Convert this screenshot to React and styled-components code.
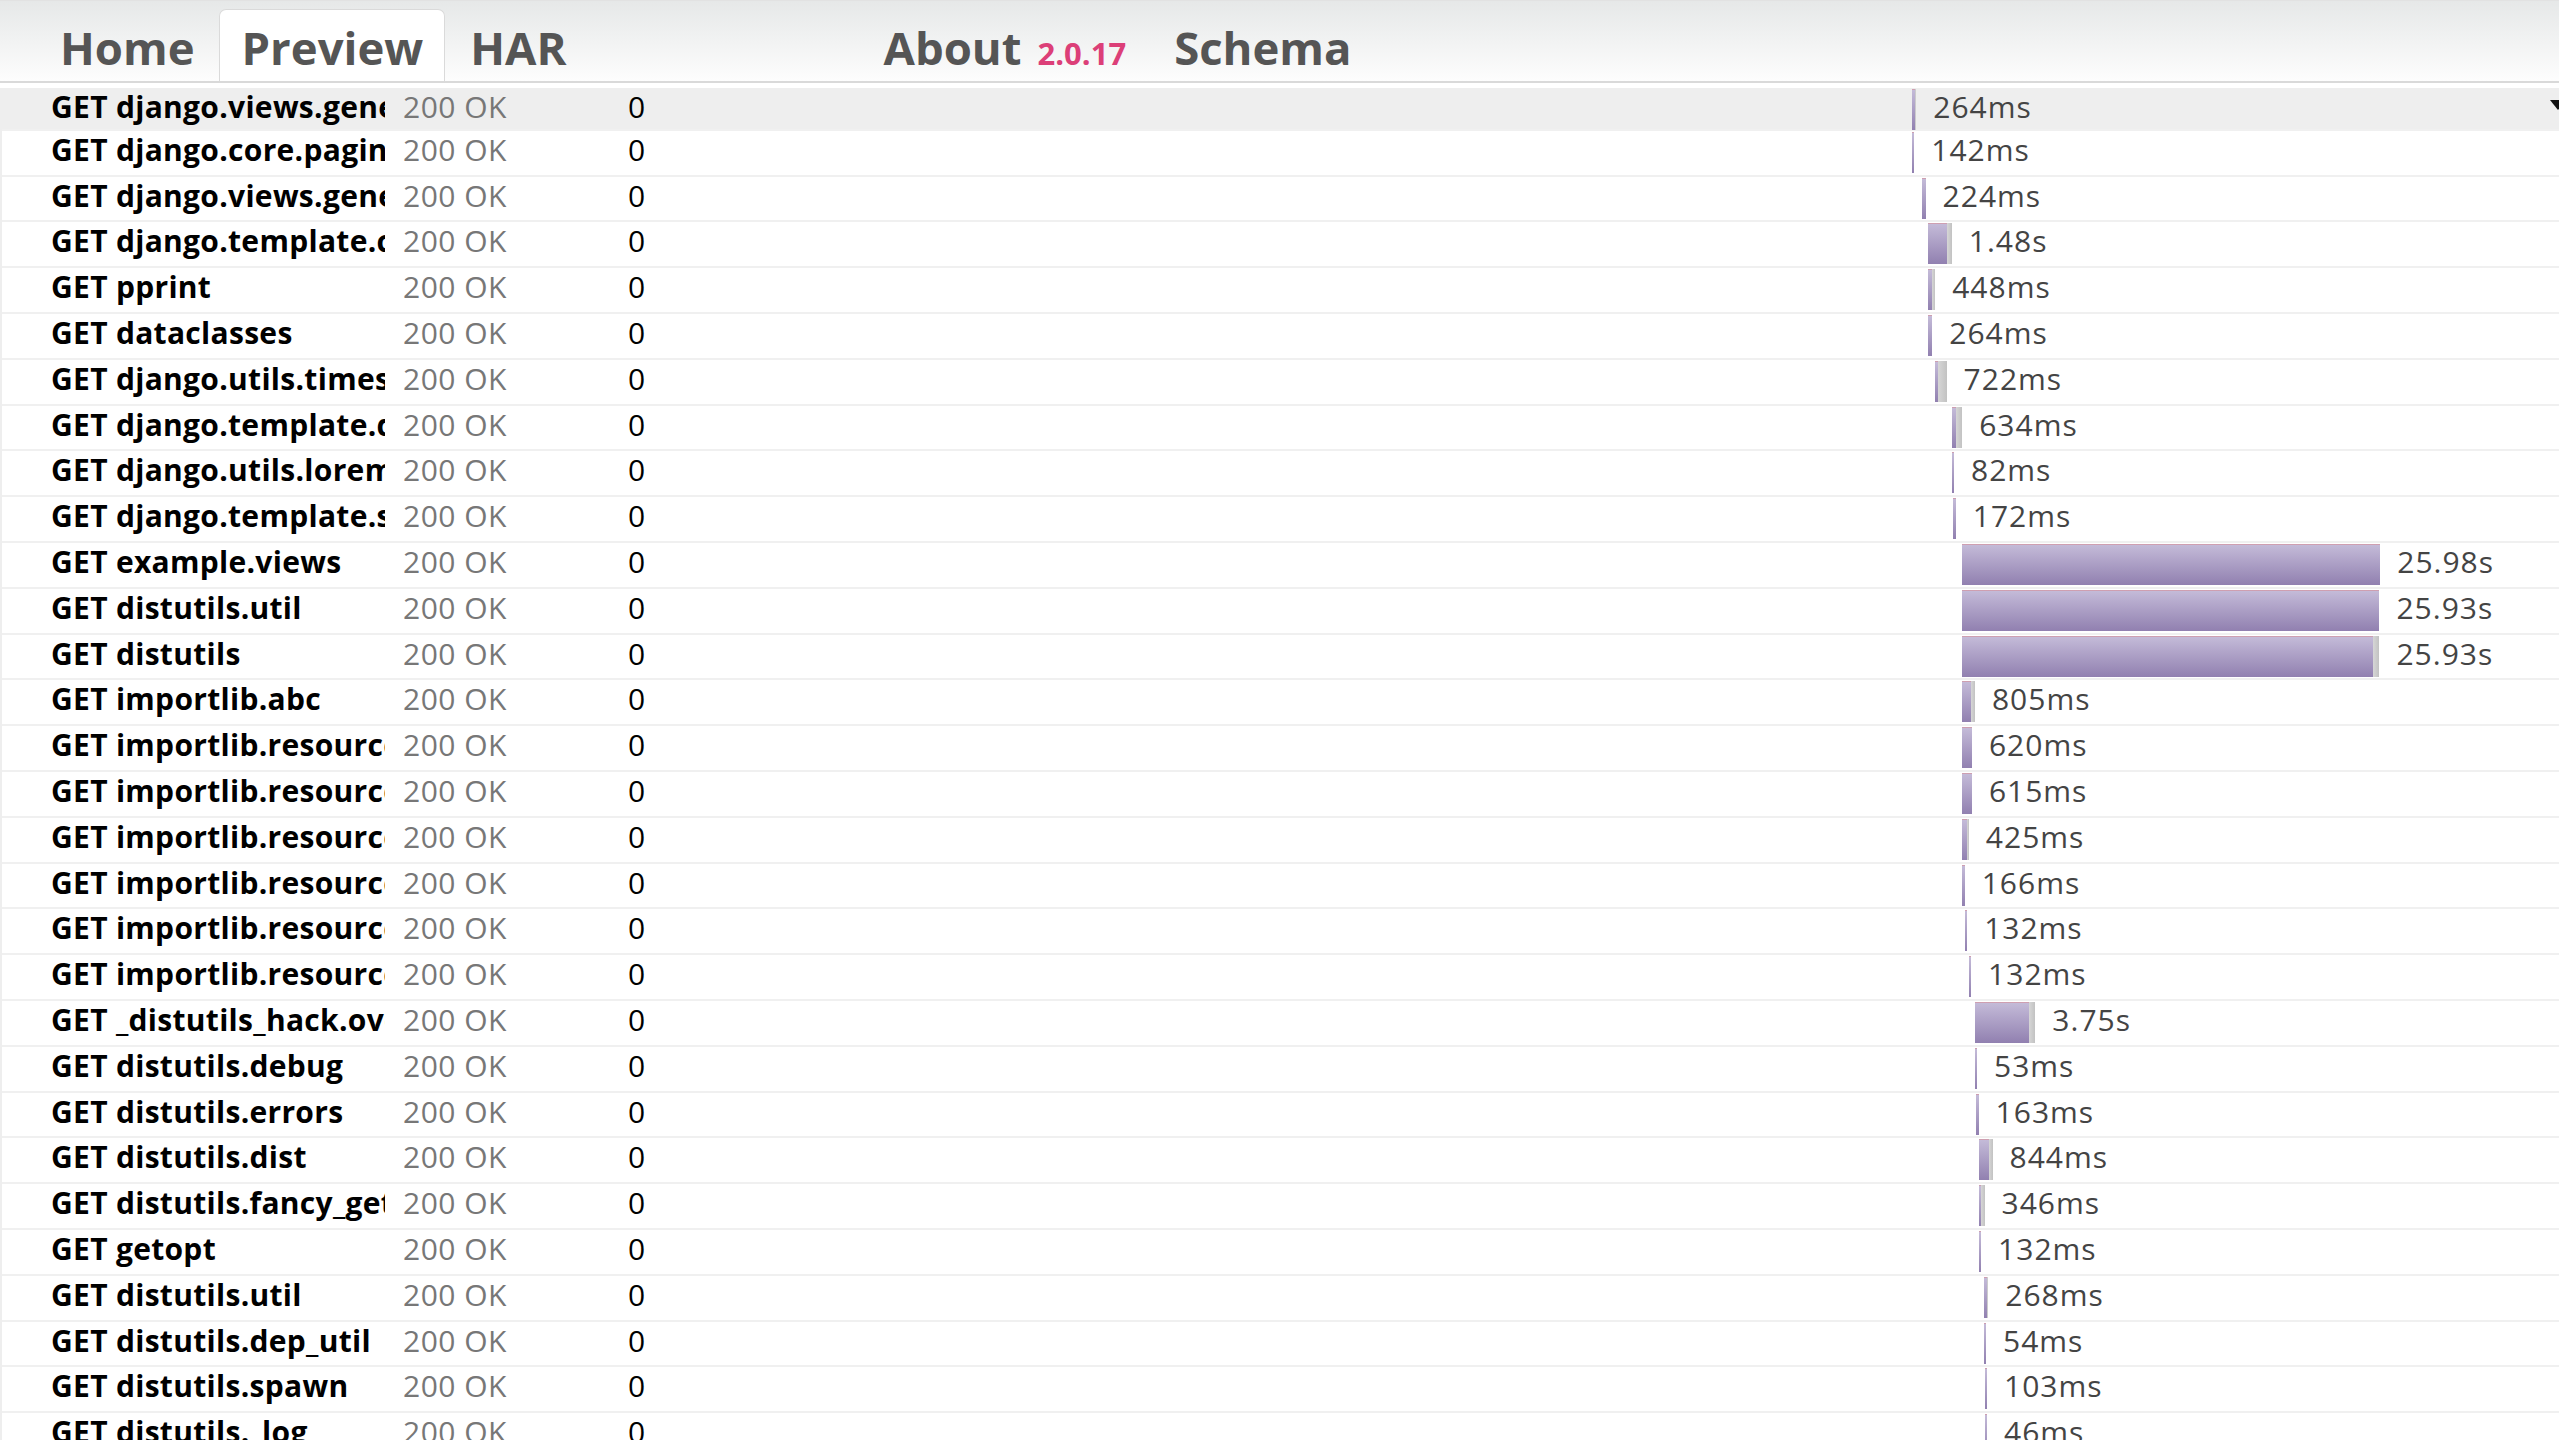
import React from 'react';
import styled, { createGlobalStyle } from 'styled-components';

const PX_PER_MS = 0.0161;
const TIMELINE_ORIGIN = 1152;

const requests = [
  { name: 'GET django.views.generic', start: 0, dur: 264, recv: 60, label: '264ms' },
  { name: 'GET django.core.paginator', start: 0, dur: 142, recv: 0, label: '142ms' },
  { name: 'GET django.views.generic.base', start: 621, dur: 224, recv: 0, label: '224ms' },
  { name: 'GET django.template.context', start: 994, dur: 1480, recv: 310, label: '1.48s' },
  { name: 'GET pprint', start: 994, dur: 448, recv: 170, label: '448ms' },
  { name: 'GET dataclasses', start: 994, dur: 264, recv: 0, label: '264ms' },
  { name: 'GET django.utils.timesince', start: 1429, dur: 722, recv: 530, label: '722ms' },
  { name: 'GET django.template.defaultfilters', start: 2484, dur: 634, recv: 370, label: '634ms' },
  { name: 'GET django.utils.lorem_ipsum', start: 2484, dur: 82, recv: 0, label: '82ms' },
  { name: 'GET django.template.smartif', start: 2547, dur: 172, recv: 0, label: '172ms' },
  { name: 'GET example.views', start: 3106, dur: 25980, recv: 0, label: '25.98s' },
  { name: 'GET distutils.util', start: 3106, dur: 25930, recv: 0, label: '25.93s' },
  { name: 'GET distutils', start: 3106, dur: 25930, recv: 430, label: '25.93s' },
  { name: 'GET importlib.abc', start: 3106, dur: 805, recv: 230, label: '805ms' },
  { name: 'GET importlib.resources.abc', start: 3106, dur: 620, recv: 0, label: '620ms' },
  { name: 'GET importlib.resources', start: 3106, dur: 615, recv: 0, label: '615ms' },
  { name: 'GET importlib.resources._common', start: 3106, dur: 425, recv: 120, label: '425ms' },
  { name: 'GET importlib.resources._adapters', start: 3106, dur: 166, recv: 0, label: '166ms' },
  { name: 'GET importlib.resources._legacy', start: 3292, dur: 132, recv: 0, label: '132ms' },
  { name: 'GET importlib.resources.readers', start: 3540, dur: 132, recv: 0, label: '132ms' },
  { name: 'GET _distutils_hack.override', start: 3913, dur: 3750, recv: 370, label: '3.75s' },
  { name: 'GET distutils.debug', start: 3913, dur: 53, recv: 0, label: '53ms' },
  { name: 'GET distutils.errors', start: 3975, dur: 163, recv: 0, label: '163ms' },
  { name: 'GET distutils.dist', start: 4161, dur: 844, recv: 220, label: '844ms' },
  { name: 'GET distutils.fancy_getopt', start: 4161, dur: 346, recv: 220, label: '346ms' },
  { name: 'GET getopt', start: 4161, dur: 132, recv: 0, label: '132ms' },
  { name: 'GET distutils.util', start: 4472, dur: 268, recv: 80, label: '268ms' },
  { name: 'GET distutils.dep_util', start: 4472, dur: 54, recv: 0, label: '54ms' },
  { name: 'GET distutils.spawn', start: 4534, dur: 103, recv: 0, label: '103ms' },
  { name: 'GET distutils._log', start: 4534, dur: 46, recv: 0, label: '46ms' },
];

const GlobalStyle = createGlobalStyle`
  html, body {
    margin: 0;
    padding: 0;
    overflow: hidden;
    background: #fff;
    font-family: "Open Sans", "DejaVu Sans", sans-serif;
  }
  * {
    box-sizing: border-box;
  }
`;

const Header = styled.nav`
  height: 83px;
  display: flex;
  align-items: flex-end;
  gap: 2px;
  padding-left: 37px;
  border-top: 1px solid #e2e2e2;
  border-bottom: 2px solid #d9d9d9;
  background: linear-gradient(#e6e8e8, #fdfdfd);
`;

const Tab = styled.div`
  height: 72px;
  display: flex;
  align-items: baseline;
  padding: 11px 21px 8px 22px;
  margin-left: ${(props) => props.$push || 0}px;
  border: 1px solid ${(props) => (props.$active ? '#dadada' : 'transparent')};
  border-bottom: none;
  border-radius: 7px 7px 0 0;
  background: ${(props) => (props.$active ? '#fff' : 'transparent')};
  color: #555;
  font-size: 45.5px;
  font-weight: 700;
  line-height: 52px;
  white-space: nowrap;
`;

const Version = styled.span`
  margin-left: 16px;
  color: #dc3f78;
  font-size: 31px;
`;

const Table = styled.div`
  margin-top: 4.5px;
  border-left: 2px solid #eee;
`;

const Row = styled.div`
  position: relative;
  display: flex;
  height: ${(props) => (props.$selected ? '41.3px' : '43.8px')};
  border-bottom: 2px solid #f0f0f0;
  background: ${(props) => (props.$selected ? '#eee' : '#fff')};
  font-size: 30px;
  line-height: 38px;
  box-sizing: content-box;
`;

const NameCell = styled.div`
  width: 383px;
  flex: none;
  padding-left: 49px;
  overflow: hidden;
  white-space: nowrap;
  font-weight: 700;
  letter-spacing: 0.3px;
  color: #000;
`;

const StatusCell = styled.div`
  width: 128px;
  flex: none;
  padding-left: 18px;
  color: #777;
  letter-spacing: 0.5px;
  white-space: nowrap;
`;

const SizeCell = styled.div`
  width: 247px;
  flex: none;
  padding-left: 115px;
  color: #000;
`;

const TimelineCell = styled.div`
  position: relative;
  flex: 1;
`;

const Timing = styled.div`
  position: absolute;
  top: 0;
  display: flex;
  align-items: flex-start;
  white-space: nowrap;
`;

const WaitBar = styled.div`
  height: 41px;
  margin-top: 1px;
  background: linear-gradient(#c5bcd9, #9180b0);
  box-shadow: inset 0 1px 0 rgba(214, 140, 150, 0.6);
`;

const RecvBar = styled.div`
  height: 41px;
  margin-top: 1px;
  background: linear-gradient(90deg, #d6d6d6, #c2c2c2);
`;

const TimeLabel = styled.span`
  margin-left: 17px;
  color: #444;
  letter-spacing: 1px;
`;

const Caret = styled.div`
  position: absolute;
  right: -7px;
  top: 12px;
  width: 0;
  height: 0;
  border-left: 8px solid transparent;
  border-right: 8px solid transparent;
  border-top: 10px solid #111;
`;

const RequestRow = ({ req, selected }) => {
  const total = req.dur * PX_PER_MS;
  const recv = req.recv * PX_PER_MS;
  const wait = Math.max(2, total - recv);
  return (
    <Row $selected={selected}>
      <NameCell>{req.name}</NameCell>
      <StatusCell>200 OK</StatusCell>
      <SizeCell>0</SizeCell>
      <TimelineCell>
        <Timing style={{ left: TIMELINE_ORIGIN + req.start * PX_PER_MS }}>
          <WaitBar style={{ width: wait }} />
          {recv > 0 && <RecvBar style={{ width: recv }} />}
          <TimeLabel>{req.label}</TimeLabel>
        </Timing>
      </TimelineCell>
      {selected && <Caret />}
    </Row>
  );
};

const App = () => {
  return (
    <>
      <GlobalStyle />
      <Header>
        <Tab>Home</Tab>
        <Tab $active>Preview</Tab>
        <Tab>HAR</Tab>
        <Tab $push={270}>
          About<Version>2.0.17</Version>
        </Tab>
        <Tab $push={1}>Schema</Tab>
      </Header>
      <Table>
        {requests.map((req, i) => (
          <RequestRow key={i} req={req} selected={i === 0} />
        ))}
      </Table>
    </>
  );
};

export default App;
